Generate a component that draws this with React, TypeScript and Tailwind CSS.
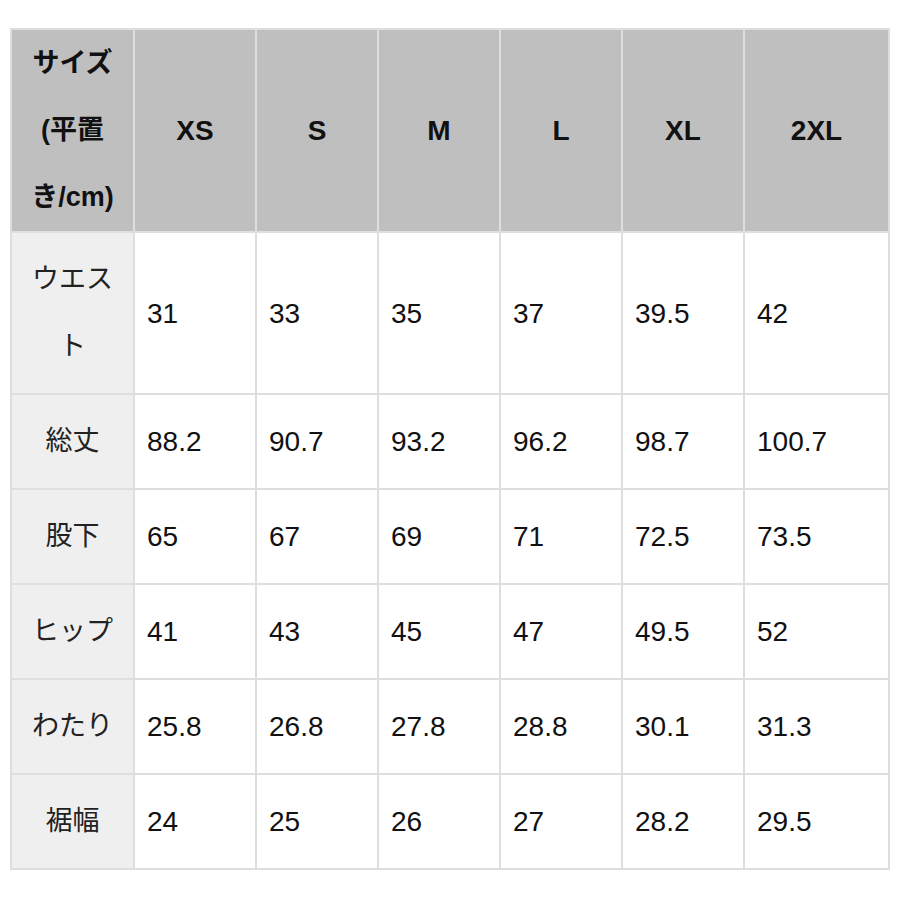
const sizes = ["XS", "S", "M", "L", "XL", "2XL"];

const rows: { label: React.ReactNode; values: string[] }[] = [
  { label: <>ウエス<br />ト</>, values: ["31", "33", "35", "37", "39.5", "42"] },
  { label: "総丈", values: ["88.2", "90.7", "93.2", "96.2", "98.7", "100.7"] },
  { label: "股下", values: ["65", "67", "69", "71", "72.5", "73.5"] },
  { label: "ヒップ", values: ["41", "43", "45", "47", "49.5", "52"] },
  { label: "わたり", values: ["25.8", "26.8", "27.8", "28.8", "30.1", "31.3"] },
  { label: "裾幅", values: ["24", "25", "26", "27", "28.2", "29.5"] },
];

export default function App() {
  return (
    <div
      className="min-h-[900px] w-[900px] bg-white pl-[10px] pt-[28px] text-[#111]"
      style={{ fontFamily: '"Liberation Sans", "Noto Sans CJK JP", sans-serif' }}
    >
      <table className="w-[878px] table-fixed border-collapse border-2 border-[#dedede] text-[28px] leading-[67px]">
        <colgroup>
          <col className="w-[123px]" />
          <col className="w-[122px]" />
          <col className="w-[122px]" />
          <col className="w-[122px]" />
          <col className="w-[122px]" />
          <col className="w-[122px]" />
          <col className="w-[145px]" />
        </colgroup>
        <thead>
          <tr className="bg-[#bfbfbf]">
            <th className="border-2 border-[#dedede] p-0 text-center text-[27px] font-bold">
              サイズ
              <br />
              (平置
              <br />
              き/cm)
            </th>
            {sizes.map((s) => (
              <th key={s} className="border-2 border-[#dedede] p-0 text-center font-bold">
                {s}
              </th>
            ))}
          </tr>
        </thead>
        <tbody>
          {rows.map((r, i) => (
            <tr key={i}>
              <td className="border-2 border-[#dedede] bg-[#efefef] px-1 py-[13px] text-center text-[27px] text-[#222]">
                {r.label}
              </td>
              {r.values.map((v, j) => (
                <td key={j} className="border-2 border-[#dedede] bg-white px-[12px] py-[13px] text-left">
                  {v}
                </td>
              ))}
            </tr>
          ))}
        </tbody>
      </table>
    </div>
  );
}
